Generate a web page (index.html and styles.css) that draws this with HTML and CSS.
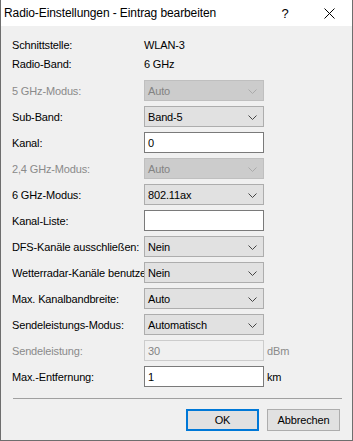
FILE: index.html
```html
<!DOCTYPE html>
<html lang="de">
<head>
  <meta charset="UTF-8">
  <meta name="viewport" content="width=device-width, initial-scale=1.0">
  <title>Radio-Einstellungen - Eintrag bearbeiten</title>
  <link rel="stylesheet" href="styles.css">
</head>
<body>
<div class="window">
    <div class="titlebar">
        <span class="title">Radio-Einstellungen - Eintrag bearbeiten</span>
        <span class="help">?</span>
        <span class="close">
            <svg width="11" height="11" viewBox="0 0 11 11"><path d="M0.5 0.5 L10.5 10.5 M10.5 0.5 L0.5 10.5" stroke="#000" stroke-width="1"/></svg>
        </span>
    </div>

    <div class="content">
        <div class="info">
            <div class="info-row"><span class="label">Schnittstelle:</span><span>WLAN-3</span></div>
            <div class="info-row"><span class="label">Radio-Band:</span><span>6 GHz</span></div>
        </div>

        <div class="form">
            <span class="label disabled">5 GHz-Modus:</span>
            <div class="combo disabled">Auto<svg class="chev" width="9" height="5" viewBox="0 0 9 5"><path d="M0.5 0.5 L4.5 4.5 L8.5 0.5" fill="none" stroke="currentColor"/></svg></div>
            <span></span>

            <span class="label">Sub-Band:</span>
            <div class="combo">Band-5<svg class="chev" width="9" height="5" viewBox="0 0 9 5"><path d="M0.5 0.5 L4.5 4.5 L8.5 0.5" fill="none" stroke="currentColor"/></svg></div>
            <span></span>

            <span class="label">Kanal:</span>
            <div class="edit">0</div>
            <span></span>

            <span class="label disabled">2,4 GHz-Modus:</span>
            <div class="combo disabled">Auto<svg class="chev" width="9" height="5" viewBox="0 0 9 5"><path d="M0.5 0.5 L4.5 4.5 L8.5 0.5" fill="none" stroke="currentColor"/></svg></div>
            <span></span>

            <span class="label">6 GHz-Modus:</span>
            <div class="combo">802.11ax<svg class="chev" width="9" height="5" viewBox="0 0 9 5"><path d="M0.5 0.5 L4.5 4.5 L8.5 0.5" fill="none" stroke="currentColor"/></svg></div>
            <span></span>

            <span class="label">Kanal-Liste:</span>
            <div class="edit"></div>
            <span></span>

            <span class="label">DFS-Kanäle ausschließen:</span>
            <div class="combo">Nein<svg class="chev" width="9" height="5" viewBox="0 0 9 5"><path d="M0.5 0.5 L4.5 4.5 L8.5 0.5" fill="none" stroke="currentColor"/></svg></div>
            <span></span>

            <span class="label">Wetterradar-Kanäle benutzen:</span>
            <div class="combo">Nein<svg class="chev" width="9" height="5" viewBox="0 0 9 5"><path d="M0.5 0.5 L4.5 4.5 L8.5 0.5" fill="none" stroke="currentColor"/></svg></div>
            <span></span>

            <span class="label">Max. Kanalbandbreite:</span>
            <div class="combo">Auto<svg class="chev" width="9" height="5" viewBox="0 0 9 5"><path d="M0.5 0.5 L4.5 4.5 L8.5 0.5" fill="none" stroke="currentColor"/></svg></div>
            <span></span>

            <span class="label">Sendeleistungs-Modus:</span>
            <div class="combo">Automatisch<svg class="chev" width="9" height="5" viewBox="0 0 9 5"><path d="M0.5 0.5 L4.5 4.5 L8.5 0.5" fill="none" stroke="currentColor"/></svg></div>
            <span></span>

            <span class="label disabled">Sendeleistung:</span>
            <div class="edit disabled">30</div>
            <span class="unit disabled">dBm</span>

            <span class="label">Max.-Entfernung:</span>
            <div class="edit">1</div>
            <span class="unit">km</span>
        </div>

        <div class="separator"></div>

        <div class="buttons">
            <div class="button default">OK</div>
            <div class="button">Abbrechen</div>
        </div>
    </div>
</div>
</body>
</html>
```

FILE: styles.css
```css
body {
    margin: 0;
    font-family: "Liberation Sans", Arial, sans-serif;
    font-size: 11px;
    letter-spacing: -0.15px;
    color: #000;
    background-color: #f0f0f0;
}
.window {
    width: 353px;
    height: 441px;
    box-sizing: border-box;
    border: 1px solid #6e6e6e;
    border-top: none;
    background-color: #f0f0f0;
    overflow: hidden;
}
.titlebar {
    height: 26px;
    background-color: #fff;
    display: flex;
    align-items: center;
    font-size: 12px;
    letter-spacing: -0.1px;
}
.title {
    flex: 1;
    padding-left: 3px;
}
.help {
    width: 14px;
    margin-right: 32px;
    font-size: 13px;
    text-align: center;
}
.close {
    width: 11px;
    margin-right: 17px;
    display: flex;
}
.content {
    padding: 9px 11px 0 11px;
}
.info-row {
    display: grid;
    grid-template-columns: 132px auto;
    height: 19px;
    align-items: center;
}
.form {
    margin-top: 7px;
    display: grid;
    grid-template-columns: 132px 120px auto;
    grid-auto-rows: 21px;
    row-gap: 5px;
    align-items: center;
}
.label {
    white-space: nowrap;
    overflow: hidden;
}
.disabled {
    color: #8a8a8a;
}
.combo {
    height: 21px;
    box-sizing: border-box;
    border: 1px solid #adadad;
    background-color: #e1e1e1;
    display: flex;
    align-items: center;
    padding-left: 3px;
    position: relative;
}
.combo .chev {
    position: absolute;
    right: 6px;
    top: 8px;
    color: #444;
}
.combo.disabled {
    background-color: #cccccc;
    border-color: #bfbfbf;
    color: #838383;
}
.combo.disabled .chev {
    color: #aaa;
}
.edit {
    height: 21px;
    box-sizing: border-box;
    border: 1px solid #7a7a7a;
    background-color: #fff;
    display: flex;
    align-items: center;
    padding-left: 3px;
}
.edit.disabled {
    background-color: #f0f0f0;
    border-color: #cccccc;
    color: #838383;
}
.unit {
    padding-left: 3px;
}
.separator {
    margin-top: 11px;
    margin-left: 1px;
    width: 329px;
    height: 1px;
    background-color: #a0a0a0;
}
.buttons {
    margin-top: 10px;
    display: flex;
    justify-content: flex-end;
    gap: 8px;
    padding-right: 1px;
}
.button {
    width: 73px;
    height: 22px;
    box-sizing: border-box;
    border: 1px solid #adadad;
    background-color: #e1e1e1;
    display: flex;
    align-items: center;
    justify-content: center;
}
.button.default {
    border: 2px solid #0078d7;
}
```
